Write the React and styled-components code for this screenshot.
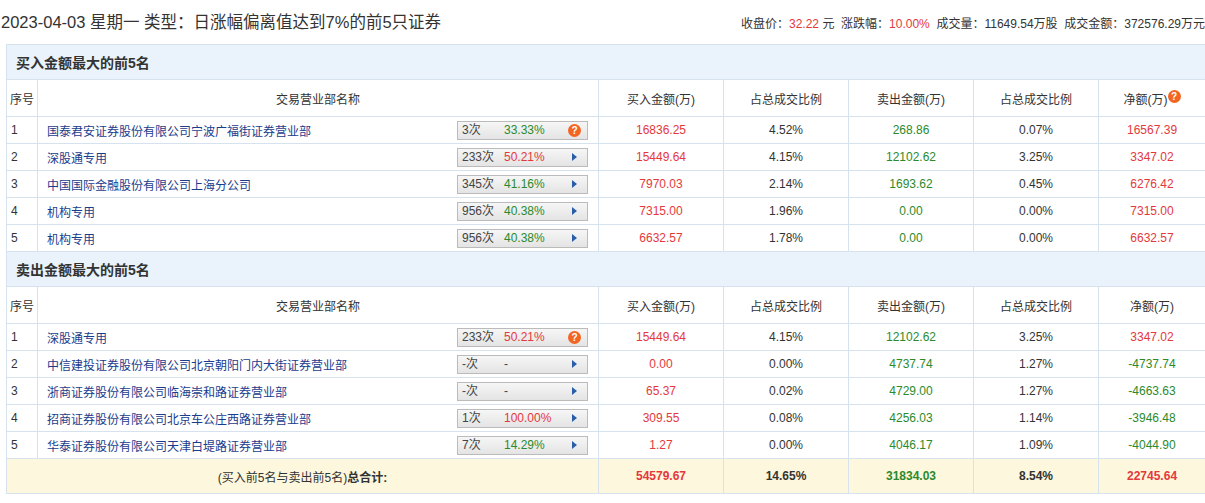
import React from 'react';
import styled, { createGlobalStyle } from 'styled-components';

const Global = createGlobalStyle`
  body { margin: 0; background: #fff; font-family: "Liberation Sans", "Noto Sans CJK SC", sans-serif; color: #333; }
`;

const Page = styled.div`
  width: 1205px;
  padding: 0 0 0 6px;
  box-sizing: border-box;
`;

const TopBar = styled.div`
  display: flex;
  justify-content: space-between;
  align-items: center;
  height: 44px;
  margin-left: -5px;
`;

const Title = styled.div`
  font-size: 16.5px;
  color: #333;
  position: relative;
  top: -1px;
`;

const Stats = styled.div`
  font-size: 12px;
  color: #333;
  span { color: #e4393c; }
`;

const Table = styled.table`
  width: 1199px;
  border-collapse: collapse;
  font-size: 12px;
  table-layout: fixed;
  td, th { border: 1px solid #d6e3ef; padding: 0; }
`;

const SectionHead = styled.td`
  background: #eaf3fc;
  height: 34px;
  text-align: left;
  font-weight: bold;
  font-size: 14px;
  padding-left: 9px !important;
  color: #333;
`;

const HeadCell = styled.th`
  font-weight: normal;
  height: 36px;
  color: #333;
  text-align: ${p => p.$left ? 'left' : 'center'};
  padding-left: ${p => p.$left ? '3px' : '0'} !important;
`;

const Cell = styled.td`
  height: 26px;
  text-align: ${p => p.$align || 'center'};
  color: ${p => p.$color || '#333'};
  padding-left: ${p => p.$align === 'left' ? '4px' : '0'} !important;
`;

const NameWrap = styled.div`
  display: flex;
  align-items: center;
  justify-content: space-between;
  padding: 0 10px 0 5px;
`;

const NameLink = styled.span`
  color: #1a3c8d;
`;

const Badge = styled.div`
  width: 131px;
  height: 19px;
  box-sizing: border-box;
  border: 1px solid #bbb;
  background: linear-gradient(#f6f6f6, #e4e4e4);
  display: flex;
  align-items: center;
  padding: 0 6px 0 4px;
  font-size: 12px;
  line-height: 17px;
  color: #444;
`;

const Times = styled.span` width: 42px; `;
const Pct = styled.span` flex: 1; color: ${p => p.$color}; `;

const Arrow = styled.span`
  width: 0; height: 0;
  border-top: 4px solid transparent;
  border-bottom: 4px solid transparent;
  border-left: 5px solid #2b5ea8;
  margin-right: 4px;
`;

const QIcon = styled.span`
  width: 13px; height: 13px; border-radius: 50%;
  background: #f26522; color: #fff; font-size: 10px; font-weight: bold;
  display: inline-flex; align-items: center; justify-content: center;
  vertical-align: ${p => p.$sup ? 'top' : 'middle'};
`;

const TotalRow = styled.tr`
  td { background: #fdf7dd; height: 34px; }
`;

const RED = '#e4393c';
const GREEN = '#2c8a2c';

const buy = [
  ['国泰君安证券股份有限公司宁波广福街证券营业部', '3次', '33.33%', GREEN, true, '16836.25', '4.52%', '268.86', '0.07%', '16567.39'],
  ['深股通专用', '233次', '50.21%', RED, false, '15449.64', '4.15%', '12102.62', '3.25%', '3347.02'],
  ['中国国际金融股份有限公司上海分公司', '345次', '41.16%', GREEN, false, '7970.03', '2.14%', '1693.62', '0.45%', '6276.42'],
  ['机构专用', '956次', '40.38%', GREEN, false, '7315.00', '1.96%', '0.00', '0.00%', '7315.00'],
  ['机构专用', '956次', '40.38%', GREEN, false, '6632.57', '1.78%', '0.00', '0.00%', '6632.57'],
];

const sell = [
  ['深股通专用', '233次', '50.21%', RED, true, '15449.64', '4.15%', '12102.62', '3.25%', '3347.02'],
  ['中信建投证券股份有限公司北京朝阳门内大街证券营业部', '-次', '-', '#444', false, '0.00', '0.00%', '4737.74', '1.27%', '-4737.74'],
  ['浙商证券股份有限公司临海崇和路证券营业部', '-次', '-', '#444', false, '65.37', '0.02%', '4729.00', '1.27%', '-4663.63'],
  ['招商证券股份有限公司北京车公庄西路证券营业部', '1次', '100.00%', RED, false, '309.55', '0.08%', '4256.03', '1.14%', '-3946.48'],
  ['华泰证券股份有限公司天津白堤路证券营业部', '7次', '14.29%', GREEN, false, '1.27', '0.00%', '4046.17', '1.09%', '-4044.90'],
];

const netColor = v => (v.startsWith('-') ? GREEN : RED);

function HeadRow({ netIcon }) {
  return (
    <tr>
      <HeadCell $left>序号</HeadCell>
      <HeadCell>交易营业部名称</HeadCell>
      <HeadCell>买入金额(万)</HeadCell>
      <HeadCell>占总成交比例</HeadCell>
      <HeadCell>卖出金额(万)</HeadCell>
      <HeadCell>占总成交比例</HeadCell>
      <HeadCell>净额(万){netIcon && <QIcon $sup>?</QIcon>}</HeadCell>
    </tr>
  );
}

function DataRow({ i, r }) {
  const [name, times, pct, pc, q, b, bp, s, sp, net] = r;
  return (
    <tr>
      <Cell $align="left" style={{ paddingLeft: 10 }}>{i}</Cell>
      <Cell $align="left">
        <NameWrap>
          <NameLink>{name}</NameLink>
          <Badge>
            <Times>{times}</Times>
            <Pct $color={pc}>{pct}</Pct>
            {q ? <QIcon>?</QIcon> : <Arrow />}
          </Badge>
        </NameWrap>
      </Cell>
      <Cell $color={RED}>{b}</Cell>
      <Cell>{bp}</Cell>
      <Cell $color={GREEN}>{s}</Cell>
      <Cell>{sp}</Cell>
      <Cell $color={netColor(net)}>{net}</Cell>
    </tr>
  );
}

export default function App() {
  return (
    <Page>
      <Global />
      <TopBar>
        <Title>2023-04-03 星期一 类型：日涨幅偏离值达到7%的前5只证券</Title>
        <Stats>
          收盘价：<span>32.22</span> 元&nbsp; 涨跌幅：<span>10.00%</span>&nbsp; 成交量：11649.54万股&nbsp; 成交金额：372576.29万元
        </Stats>
      </TopBar>
      <Table>
        <colgroup>
          <col style={{ width: 31 }} />
          <col style={{ width: 561 }} />
          <col style={{ width: 125 }} />
          <col style={{ width: 125 }} />
          <col style={{ width: 125 }} />
          <col style={{ width: 125 }} />
          <col style={{ width: 107 }} />
        </colgroup>
        <tbody>
          <tr><SectionHead colSpan={7}>买入金额最大的前5名</SectionHead></tr>
          <HeadRow netIcon />
          {buy.map((r, i) => <DataRow key={'b' + i} i={i + 1} r={r} />)}
          <tr><SectionHead colSpan={7}>卖出金额最大的前5名</SectionHead></tr>
          <HeadRow />
          {sell.map((r, i) => <DataRow key={'s' + i} i={i + 1} r={r} />)}
          <TotalRow>
            <Cell colSpan={2}>(买入前5名与卖出前5名)<b>总合计:</b></Cell>
            <Cell $color={RED}><b>54579.67</b></Cell>
            <Cell><b>14.65%</b></Cell>
            <Cell $color={GREEN}><b>31834.03</b></Cell>
            <Cell><b>8.54%</b></Cell>
            <Cell $color={RED}><b>22745.64</b></Cell>
          </TotalRow>
        </tbody>
      </Table>
    </Page>
  );
}
